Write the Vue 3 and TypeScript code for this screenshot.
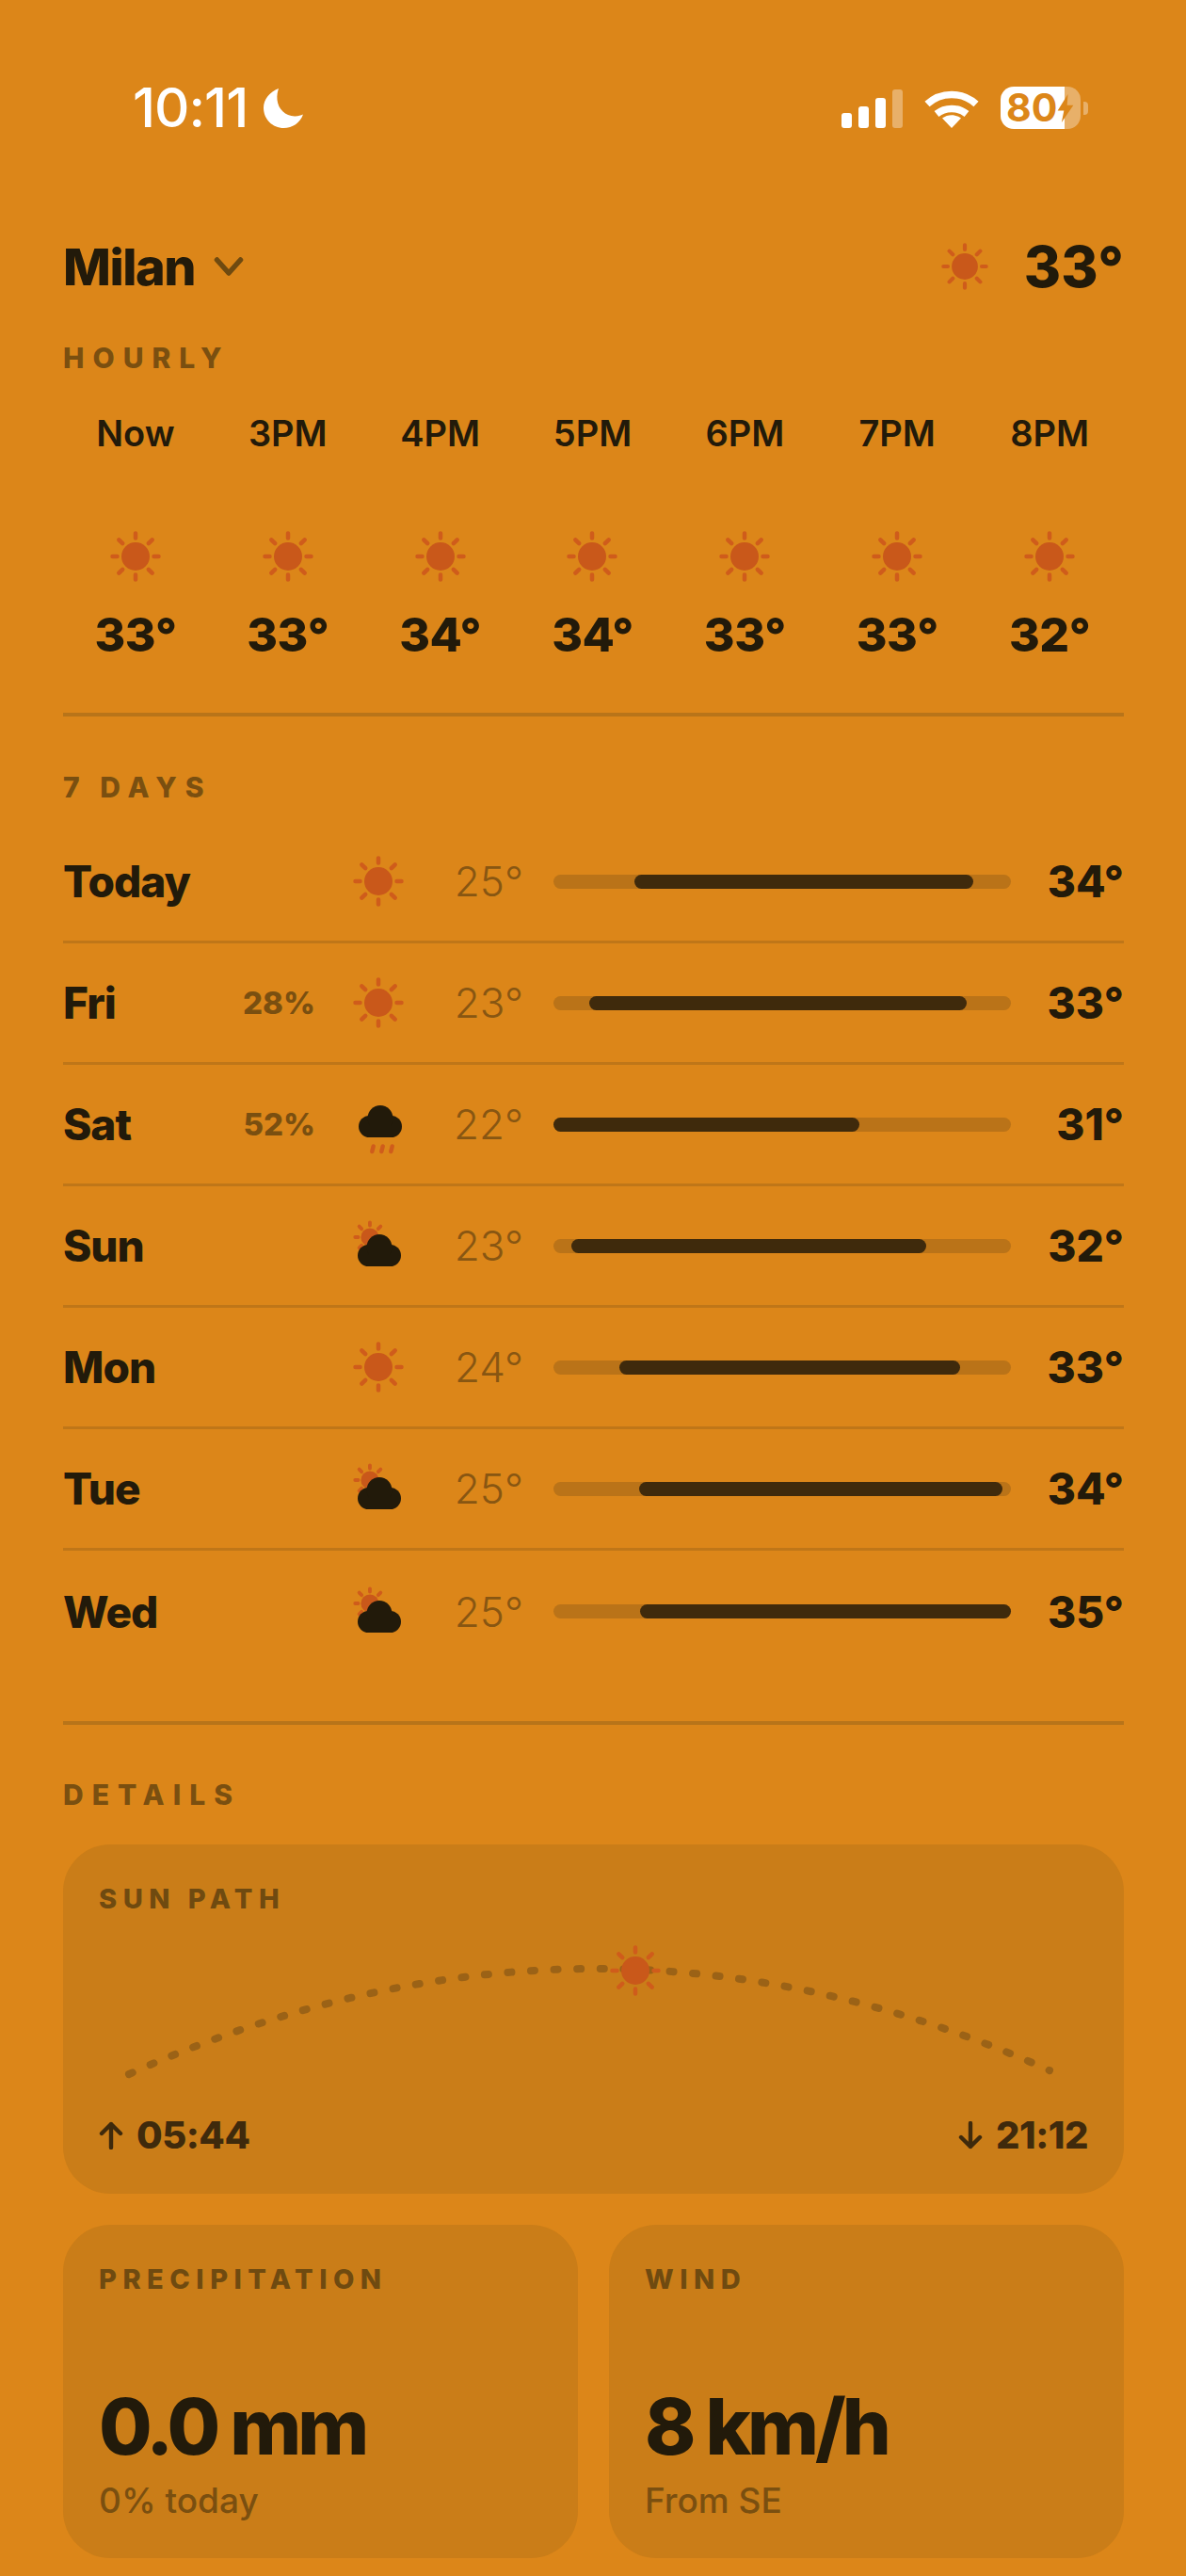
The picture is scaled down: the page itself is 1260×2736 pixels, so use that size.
<template>
  <div class="screen">
    <svg class="defs" width="0" height="0">
      <symbol id="sun" viewBox="0 0 54 54">
        <circle cx="27" cy="27" r="15" fill="#c9581a" />
        <path d="M27 2.500v5M27 46.500v5M2.500 27h5M46.500 27h5M9.300 9.300l3.900 3.900M40.800 40.800l3.900 3.900M44.700 9.300l-3.900 3.900M13.200 40.800l-3.900 3.900" stroke="#cf5c1b" stroke-width="4.500" stroke-linecap="round" />
      </symbol>
      <symbol id="cloud" viewBox="0 0 54 54">
        <g fill="#221a0a">
          <circle cx="17.500" cy="29.500" r="11.500" />
          <circle cx="40.500" cy="29.500" r="11.500" />
          <circle cx="29" cy="20.500" r="13.500" />
          <rect x="17.500" y="22" width="23" height="19" />
        </g>
      </symbol>
      <symbol id="rain" viewBox="0 0 54 54" overflow="visible">
        <use href="#cloud" width="54" height="54" />
        <path d="M21.700 50.500L20.300 56M31.700 50.500L30.300 56M41.700 50.500L40.300 56" stroke="#cf5c1b" stroke-width="4.500" stroke-linecap="round" />
      </symbol>
      <symbol id="partly" viewBox="0 0 54 54">
        <g transform="translate(.7 .7) scale(.64)">
          <circle cx="27" cy="27" r="15" fill="#c9581a" />
          <path d="M27 2.500v5M2.500 27h5M9.300 9.300l3.900 3.900M44.700 9.300l-3.900 3.900M13.200 40.800l-3.900 3.900" stroke="#cf5c1b" stroke-width="6" stroke-linecap="round" />
        </g>
        <use href="#cloud" width="54" height="54" transform="translate(-1 8)" />
      </symbol>
    </svg>

    <div class="status">
      <div class="status-left">
        <span class="clock">10:11</span>
        <svg class="moon" viewBox="0 0 42 42"><path d="M16 0C15 3 14 7 14.500 12 15.500 22 23 29 33 29.500 36.500 29.700 39.500 28.500 42 27.500 39 36.500 30.500 42 21.500 42 9.500 42 0 32.500 0 20.500 0 11.500 6.500 3.500 16 0Z" fill="#fff" /></svg>
      </div>
      <div class="status-right">
        <div class="signal">
          <span class="b1"></span><span class="b2"></span><span class="b3"></span><span class="b4"></span>
        </div>
        <svg class="wifi" viewBox="0 0 58 42">
          <g fill="none" stroke="#fff" stroke-width="7.500">
            <path d="M3 16.500C17.500 3 40.500 3 55 16.500" />
            <path d="M13 27C22 19.500 36 19.500 45 27" />
          </g>
          <path d="M29 42L19 31.500C25 27 33 27 39 31.500Z" fill="#fff" />
        </svg>
        <div class="battery">
          <div class="batt-body">
            <span class="batt-text">80</span>
            <svg class="bolt" viewBox="0 0 20 36"><path d="M13 0L0 21h8L5 36 20 14h-8Z" fill="#dc8619" /></svg>
          </div>
          <span class="batt-cap"></span>
        </div>
      </div>
    </div>

    <div class="head">
      <div class="city">
        <span>Milan</span>
        <svg class="chev" viewBox="0 0 32 22"><path d="M3.500 4L16 18 28.500 4" fill="none" stroke="#6f4a10" stroke-width="5.500" stroke-linecap="round" stroke-linejoin="round" /></svg>
      </div>
      <div class="now">
        <svg class="sun-head"><use href="#sun" /></svg>
        <span>33°</span>
      </div>
    </div>

    <div class="label">HOURLY</div>
    <div class="hours">
      <div v-for="h in hours" :key="h.time" class="hour">
        <span class="hour-time">{{ h.time }}</span>
        <svg class="icon"><use href="#sun" /></svg>
        <span class="hour-temp">{{ h.temp }}°</span>
      </div>
    </div>
    <div class="divider"></div>

    <div class="label days-label">7 DAYS</div>
    <div class="days">
      <div v-for="d in days" :key="d.name" class="day">
        <span class="day-name">{{ d.name }}</span>
        <span class="day-pct">{{ d.pct }}</span>
        <svg class="icon"><use :href="'#' + d.icon" /></svg>
        <span class="day-low">{{ d.low }}°</span>
        <div class="track">
          <div class="fill" :style="{ left: d.from + '%', width: d.to - d.from + '%' }"></div>
        </div>
        <span class="day-high">{{ d.high }}°</span>
      </div>
    </div>
    <div class="divider bottom"></div>

    <div class="label details-label">DETAILS</div>
    <div class="card sun-card">
      <div class="card-label">SUN PATH</div>
      <svg class="arc" viewBox="0 0 1051 180">
        <path d="M32 153Q525 -69 1010 149" fill="none" stroke="#9b6216" stroke-width="8" stroke-linecap="round" pathLength="1000" stroke-dasharray="4 20.380" />
        <use href="#sun" x="543" y="16" width="54" height="54" />
      </svg>
      <div class="times">
        <span class="time">
          <svg class="arrow" viewBox="0 0 26 30"><path d="M13 28V3M3 13L13 3l10 10" fill="none" stroke="#3f2a0c" stroke-width="4.400" stroke-linecap="round" stroke-linejoin="round" /></svg>
          05:44
        </span>
        <span class="time">
          <svg class="arrow" viewBox="0 0 26 30"><path d="M13 2v25M3 17l10 10 10-10" fill="none" stroke="#3f2a0c" stroke-width="4.400" stroke-linecap="round" stroke-linejoin="round" /></svg>
          21:12
        </span>
      </div>
    </div>

    <div class="pair">
      <div v-for="c in stats" :key="c.label" class="card stat">
        <div class="card-label">{{ c.label }}</div>
        <div class="stat-value">{{ c.value }}</div>
        <div class="stat-sub">{{ c.sub }}</div>
      </div>
    </div>
  </div>
</template>

<script setup lang="ts">
const hours = [
  { time: 'Now', temp: 33 },
  { time: '3PM', temp: 33 },
  { time: '4PM', temp: 34 },
  { time: '5PM', temp: 34 },
  { time: '6PM', temp: 33 },
  { time: '7PM', temp: 33 },
  { time: '8PM', temp: 32 },
]

const days = [
  { name: 'Today', pct: '', icon: 'sun', low: 25, high: 34, from: 17.6, to: 91.7 },
  { name: 'Fri', pct: '28%', icon: 'sun', low: 23, high: 33, from: 7.9, to: 90.3 },
  { name: 'Sat', pct: '52%', icon: 'rain', low: 22, high: 31, from: 0, to: 66.9 },
  { name: 'Sun', pct: '', icon: 'partly', low: 23, high: 32, from: 4, to: 81.4 },
  { name: 'Mon', pct: '', icon: 'sun', low: 24, high: 33, from: 14.4, to: 88.8 },
  { name: 'Tue', pct: '', icon: 'partly', low: 25, high: 34, from: 18.7, to: 98.2 },
  { name: 'Wed', pct: '', icon: 'partly', low: 25, high: 35, from: 19, to: 100 },
]

const stats = [
  { label: 'PRECIPITATION', value: '0.0 mm', sub: '0% today' },
  { label: 'WIND', value: '8 km/h', sub: 'From SE' },
]
</script>

<style>
html, body { margin: 0; background: #dc8619; }
</style>

<style scoped>
.screen {
  width: 1260px; height: 2736px; box-sizing: border-box; overflow: hidden;
  padding: 92px 66px 0 67px;
  background: #dc8619; color: #221a0a;
  font-family: Inter, "Noto Sans", sans-serif;
}
.defs { display: block; height: 0; width: 0; }

.status { display: flex; justify-content: space-between; height: 45px; margin: 0 38px 0 74px; }
.status-left { display: flex; align-items: center; gap: 17px; }
.clock { font-size: 58px; font-weight: 500; line-height: 47px; color: #fff; letter-spacing: -1px; }
.moon { width: 42px; height: 42px; }
.status-right { display: flex; align-items: center; gap: 23px; }
.signal { display: flex; align-items: flex-end; gap: 7px; height: 41px; margin-top: 2px; }
.signal span { width: 11px; border-radius: 3px; background: #fff; }
.b1 { height: 16px; }
.b2 { height: 23px; }
.b3 { height: 32px; }
.b4 { height: 41px; background: rgba(255, 255, 255, 0.35) !important; }
.wifi { width: 58px; height: 42px; }
.battery { display: flex; align-items: center; gap: 3px; }
.batt-body {
  position: relative; width: 85px; height: 45px; border-radius: 14px;
  background: linear-gradient(90deg, #fff 68px, rgba(255, 255, 255, 0.35) 68px);
}
.batt-text { position: absolute; left: 6px; top: 0; font-size: 41px; line-height: 45px; font-weight: 700; color: #dc8619; }
.bolt { position: absolute; left: 59px; top: 8px; width: 20px; height: 30px; }
.batt-cap { width: 5px; height: 14px; border-radius: 0 4px 4px 0; background: rgba(255, 255, 255, 0.35); }

.head { display: flex; justify-content: space-between; align-items: center; height: 60px; margin-top: 116px; }
.city { display: flex; align-items: center; gap: 20px; font-size: 54px; font-weight: 800; letter-spacing: -1.5px; }
.chev { width: 32px; height: 22px; }
.now { display: flex; align-items: center; gap: 38px; font-size: 60px; font-weight: 800; }
.sun-head { width: 50px; height: 50px; }

.label { margin-top: 49px; font-size: 30px; line-height: 36px; font-weight: 800; letter-spacing: 9px; word-spacing: -3px; color: #7a4f10; }

.hours { display: grid; grid-template-columns: repeat(7, 1fr); margin: 37px -2px 0 -4px; }
.hour { display: flex; flex-direction: column; align-items: center; }
.hour-time { font-size: 38px; line-height: 50px; font-weight: 600; }
.icon { width: 54px; height: 54px; overflow: visible; }
.hour .icon { margin-top: 79px; }
.hour-temp { margin-top: 26px; font-size: 50px; line-height: 60px; font-weight: 800; letter-spacing: -0.5px; }

.divider { height: 4px; margin-top: 53px; background: #b87419; }
.divider.bottom { margin-top: 52px; }
.days-label { margin-top: 57px; }

.days { margin-top: 19px; }
.day {
  display: grid; align-items: center; height: 129px; box-sizing: border-box;
  grid-template-columns: 194px 73px 136px 86px 518px 1fr;
  border-bottom: 3px solid #bf7618;
}
.day:last-child { border-bottom: 0; }
.day-name { font-size: 46px; font-weight: 800; letter-spacing: -1px; }
.day-pct { justify-self: end; margin-right: -1px; font-size: 33px; font-weight: 800; color: #7a4f10; white-space: nowrap; }
.day .icon { justify-self: center; }
.day-low { font-size: 44px; font-weight: 300; color: #885612; text-align: right; }
.track { position: relative; height: 15px; margin-left: 32px; border-radius: 8px; background: #ba7318; }
.fill { position: absolute; top: 0; bottom: 0; border-radius: 8px; background: #3f2a0c; }
.day-high { font-size: 46px; font-weight: 800; text-align: right; }

.details-label { margin-top: 56px; }
.card { box-sizing: border-box; border-radius: 50px; padding: 40px 38px 0; background: #ca7d18; }
.sun-card { height: 371px; margin-top: 35px; }
.card-label { font-size: 29px; line-height: 36px; font-weight: 800; letter-spacing: 6.5px; color: #6f4a10; }
.arc { display: block; width: 1051px; height: 180px; margin-top: 15px; overflow: visible; }
.times { display: flex; justify-content: space-between; margin-top: 13px; }
.time { display: flex; align-items: center; gap: 14px; font-size: 40px; line-height: 50px; font-weight: 800; letter-spacing: -0.5px; color: #3f2a0c; }
.arrow { width: 26px; height: 30px; }

.pair { display: grid; grid-template-columns: 547px 547px; gap: 33px; margin-top: 33px; }
.stat { height: 354px; }
.stat-value { margin-top: 89px; font-size: 82px; line-height: 100px; font-weight: 800; letter-spacing: -4px; }
.stat-sub { margin-top: 3px; font-size: 37px; line-height: 50px; font-weight: 500; color: #7a4f10; }
</style>
